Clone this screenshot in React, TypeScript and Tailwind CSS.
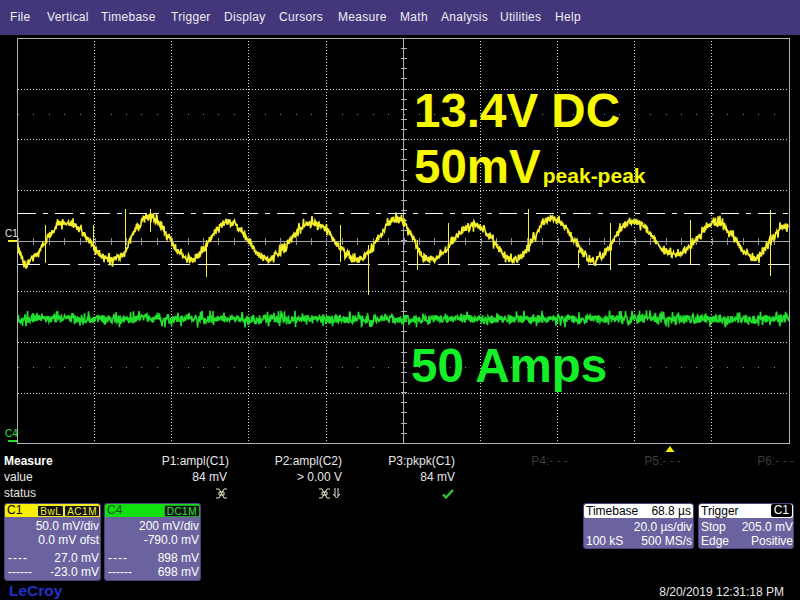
const MENU = ["File", "Vertical", "Timebase", "Trigger", "Display", "Cursors", "Measure", "Math", "Analysis", "Utilities", "Help"];
const MENU_GAPS = ["w-[37px]", "w-[54px]", "w-[70px]", "w-[53px]", "w-[55px]", "w-[59px]", "w-[62px]", "w-[41px]", "w-[59px]", "w-[55px]", "w-[40px]"];

const VLINES = [94, 171, 248, 326, 480, 557, 634, 711];
const HLINES = [89, 139, 190, 291, 342, 393];
const DOT_ROWS = [114, 367];
const TOP = 38;
const BOTTOM = 443;
const LEFT = 18;
const RIGHT = 789;

// wave extremes read off the screen
const YELLOW: [number, number][] = [
  [18, 250], [25, 262], [65, 222], [113, 260], [150, 217], [190, 260], [228, 222], [267, 258], [313, 222], [357, 260],
  [397, 219], [430, 260], [473, 225], [515, 260], [552, 218], [595, 260], [632, 221], [675, 255], [717, 222], [753, 258], [788, 225],
];
const SPIKES: [number, number, number][] = [
  [45, 225, 263], [93, 225, 250], [125, 209, 250], [150, 209, 232], [206, 240, 277], [368, 245, 295], [340, 225, 262],
  [417, 240, 270], [448, 223, 264], [528, 209, 250], [578, 250, 268], [610, 223, 270], [690, 220, 265], [770, 210, 276],
];

function rng(seed: number) {
  let s = seed;
  return () => {
    s = (s * 16807) % 2147483647;
    return s / 2147483647 - 0.5;
  };
}

function yellowPath() {
  const r = rng(12345);
  let d = "";
  let i = 0;
  for (let x = LEFT; x <= 788; x += 0.5) {
    while (i < YELLOW.length - 2 && x > YELLOW[i + 1][0]) i++;
    const [x0, y0] = YELLOW[i];
    const [x1, y1] = YELLOW[i + 1];
    const t = (x - x0) / (x1 - x0);
    const y = y0 + ((y1 - y0) * (1 - Math.cos(Math.PI * t))) / 2 + r() * (r() > 0.3 ? 14 : 7);
    d += `${d ? "L" : "M"}${x} ${y.toFixed(1)}`;
  }
  return d;
}

function greenPath() {
  const r = rng(777);
  let d = "";
  for (let x = LEFT; x <= 789; x += 0.5) {
    const y = 319 + r() * (r() > 0.32 ? 17 : 8);
    d += `${d ? "L" : "M"}${x} ${y.toFixed(1)}`;
  }
  return d;
}

function Grid() {
  const ticks: number[] = [];
  for (let x = LEFT; x <= RIGHT; x += 15.42) ticks.push(x);
  const vticks: number[] = [];
  for (let y = TOP; y <= BOTTOM; y += 10.12) vticks.push(y);
  return (
    <svg width="800" height="418" viewBox="0 35 800 418" className="block">
      {VLINES.map((x) => (
        <line key={x} x1={x + 0.5} x2={x + 0.5} y1={TOP} y2={BOTTOM} stroke="#d8d8d8" strokeDasharray="1 2" />
      ))}
      {HLINES.map((y) => (
        <line key={y} x1={LEFT} x2={RIGHT} y1={y + 0.5} y2={y + 0.5} stroke="#d8d8d8" strokeDasharray="1 2" />
      ))}
      {DOT_ROWS.map((y) =>
        ticks.map((x) => <rect key={`${y}-${x}`} x={Math.round(x)} y={y} width="1" height="1" fill="#8a8a8a" />),
      )}
      <line x1={LEFT} x2={RIGHT} y1="241.5" y2="241.5" stroke="#a8a8a8" />
      {ticks.map((x) => (
        <line key={x} x1={Math.round(x) + 0.5} x2={Math.round(x) + 0.5} y1="238" y2="245" stroke="#8c8c8c" />
      ))}
      <line x1="403.5" x2="403.5" y1={TOP} y2={BOTTOM} stroke="#b4b4b4" />
      {vticks.map((y) => (
        <line key={y} x1="401" x2="407" y1={Math.round(y) + 0.5} y2={Math.round(y) + 0.5} stroke="#b0b0b0" />
      ))}
      <rect x="17.5" y="38.5" width="772" height="405" fill="none" stroke="#b4b4b4" />
      <line x1={LEFT} x2={RIGHT} y1="213.5" y2="213.5" stroke="#f4f4f4" strokeDasharray="18 7 5 7" />
      <line x1={LEFT} x2={RIGHT} y1="264.5" y2="264.5" stroke="#f4f4f4" strokeDasharray="22 8" />
      <path d={greenPath()} fill="none" stroke="#22e02e" strokeWidth="1.6" />
      <path d={yellowPath()} fill="none" stroke="#f6f02c" strokeWidth="1.6" />
      {SPIKES.map(([x, y0, y1]) => (
        <line key={x} x1={x + 0.5} x2={x + 0.5} y1={y0} y2={y1} stroke="#f6f02c" />
      ))}
      <path d="M665.5 452l4.5-6 4.5 6z" fill="#f8f000" />
      <rect x="8" y="240" width="9" height="2" fill="#f6f02c" />
      <rect x="8" y="440" width="9" height="2" fill="#22e02e" />
    </svg>
  );
}

function StatusMark() {
  return (
    <svg width="13" height="11" viewBox="0 0 13 11" className="inline-block" fill="none" stroke="#e6e8c0" strokeWidth="1">
      <path d="M1 1h3l5 9h3M12 1H9l-5 9H1M4 4h5v3H4z" />
    </svg>
  );
}

function DownArrow() {
  return (
    <svg width="9" height="11" viewBox="0 0 9 11" className="inline-block ml-[1px]" fill="none" stroke="#e8e8e8" strokeWidth="1">
      <path d="M3 0v8M6 0v8M1 6l3.5 4L8 6" />
    </svg>
  );
}

function CheckMark() {
  return (
    <svg width="12" height="10" viewBox="0 0 12 10" className="inline-block" fill="none" stroke="#2fc83a" strokeWidth="2.4">
      <path d="M1 5.5l3 3L11 1" />
    </svg>
  );
}

function ChannelBox({ name, color, badges, rows }: { name: string; color: string; badges: string[]; rows: string[][] }) {
  return (
    <div className="w-[97px] h-[78px] rounded-[3px] bg-[#6a639f] overflow-hidden border border-[#4a4478]">
      <div className={`h-[13px] flex items-center justify-between rounded-t-[2px] pl-[2px] text-[12px] leading-[13px] ${color}`}>
        <span>{name}</span>
        <span className="flex">
          {badges.map((b) => (
            <span key={b} className={`h-[12px] px-[2px] leading-[11px] rounded-[2px] bg-[#111] border text-[10px] tracking-[0.5px] ${name === "C1" ? "border-[#f6f02c] text-[#f6f02c]" : "border-[#1ea82a] text-[#2be83a]"}`}>
              {b}
            </span>
          ))}
        </span>
      </div>
      <div className="mt-[2px] text-right pr-[1px] leading-[14px] text-white">
        <div>{rows[0][0]}</div>
        <div>{rows[0][1]}</div>
      </div>
      <div className="mt-[4px] leading-[14px] text-white">
        {rows.slice(1).map(([k, v], i) => (
          <div key={v} className="flex justify-between pr-[1px] pl-[3px]">
            <span className={i === 0 ? "tracking-[1px]" : ""}>{k}</span>
            <span>{v}</span>
          </div>
        ))}
      </div>
    </div>
  );
}

export default function App() {
  const headers = ["P1:ampl(C1)", "P2:ampl(C2)", "P3:pkpk(C1)", "P4:- - -", "P5:- - -", "P6:- - -"];
  return (
    <div className="w-[800px] h-[600px] bg-black overflow-hidden text-[#e8e8e8] text-[12px] font-['Liberation_Sans',Arial,sans-serif]">
      <div className="h-[35px] bg-[#43367a] flex items-center pl-[10px] pb-[1px] text-[12px] tracking-[0.3px] text-[#eeeef6]">
        {MENU.map((m, i) => (
          <span key={m} className={MENU_GAPS[i]}>{m}</span>
        ))}
      </div>

      <div className="relative h-[418px]">
        <Grid />
        <div className="absolute left-[414px] top-[49px] text-[47.5px] leading-[54px] font-bold text-[#f8f800]">13.4V DC</div>
        <div className="absolute left-[414px] top-[105px] text-[47.5px] leading-[54px] font-bold text-[#f8f800]">
          50mV<span className="text-[21px] ml-[2px]">peak-peak</span>
        </div>
        <div className="absolute left-[411px] top-[304px] text-[47.5px] leading-[54px] font-bold text-[#14f028]">50 Amps</div>
        <div className="absolute left-[5px] top-[191px] text-[10px] text-[#e8e8e8]">C1</div>
        <div className="absolute left-[5px] top-[391px] text-[10px] text-[#2be83a]">C4</div>
      </div>

      <div className="grid grid-cols-[112px_repeat(6,113px)] pl-[4px] leading-[16px]">
        <div className="font-bold text-white">Measure</div>
        {headers.map((h, i) => (
          <div key={h} className={`text-right ${i > 2 ? "text-[#3c3c3c]" : ""}`}>{h}</div>
        ))}
        <div>value</div>
        <div className="text-right pr-[2px]">84 mV</div>
        <div className="text-right">&gt; 0.00 V</div>
        <div className="text-right">84 mV</div>
        <div className="col-span-3" />
        <div>status</div>
        <div className="text-right pr-[1px]"><StatusMark /></div>
        <div className="text-right pr-[1px]"><StatusMark /><DownArrow /></div>
        <div className="text-right pr-[1px]"><CheckMark /></div>
      </div>

      <div className="flex items-start pl-[4px] gap-[3px] mt-[2px]">
        <ChannelBox
          name="C1"
          color="bg-[#f8f000] text-black"
          badges={["BwL", "AC1M"]}
          rows={[["50.0 mV/div", "0.0 mV ofst"], ["----", "27.0 mV"], ["------", "-23.0 mV"]]}
        />
        <ChannelBox
          name="C4"
          color="bg-[#10e010] text-[#0a5a0a]"
          badges={["DC1M"]}
          rows={[["200 mV/div", "-790.0 mV"], ["----", "898 mV"], ["------", "698 mV"]]}
        />
        <div className="ml-[379px] w-[111px] h-[46px] rounded-[3px] bg-[#6a639f] border border-[#4a4478] overflow-hidden text-white leading-[14px]">
          <div className="h-[14px] bg-white text-black flex justify-between px-[2px] rounded-[2px] leading-[14px]">
            <span>Timebase</span>
            <span>68.8 µs</span>
          </div>
          <div className="text-right pr-[1px] mt-[2px]">20.0 µs/div</div>
          <div className="flex justify-between pl-[2px] pr-[1px]">
            <span>100 kS</span>
            <span>500 MS/s</span>
          </div>
        </div>
        <div className="ml-[1px] w-[96px] h-[46px] rounded-[3px] bg-[#6a639f] border border-[#4a4478] overflow-hidden text-white leading-[14px]">
          <div className="h-[14px] bg-white text-black flex justify-between pl-[2px] pr-[1px] rounded-[2px] leading-[14px]">
            <span>Trigger</span>
            <span className="bg-black text-white rounded-[2px] px-[3px] leading-[13px] h-[13px]">C1</span>
          </div>
          <div className="flex justify-between pl-[2px] mt-[2px]">
            <span>Stop</span>
            <span>205.0 mV</span>
          </div>
          <div className="flex justify-between pl-[2px]">
            <span>Edge</span>
            <span>Positive</span>
          </div>
        </div>
      </div>

      <div className="flex justify-between items-end pl-[9px] pr-[16px] mt-[1px]">
        <span className="text-[15.5px] leading-[17px] font-bold text-[#2233cc]">LeCroy</span>
        <span className="leading-[14px]">8/20/2019 12:31:18 PM</span>
      </div>
    </div>
  );
}
